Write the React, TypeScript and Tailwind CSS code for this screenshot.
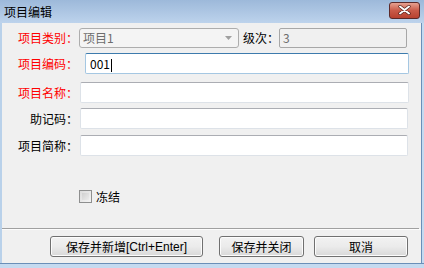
import React from "react";

const font = { fontFamily: '"Noto Sans CJK SC", "Liberation Sans", sans-serif' };

function Label({ text, red, w = "w-[77px]", pr = "pr-[1px]" }: { text: string; red?: boolean; w?: string; pr?: string }) {
  return (
    <div className={`${w} ${pr} shrink-0 text-right text-[12px] leading-none ${red ? "text-[#ff0000]" : "text-black"}`}>
      {text}
    </div>
  );
}

function TextBox({ value, focused, className = "" }: { value?: string; focused?: boolean; className?: string }) {
  return (
    <div
      className={`h-[21px] bg-white rounded-[2px] border flex items-center px-[4px] text-[12px] ${
        focused
          ? "border-[#a5c7e2] border-t-[#3d7bad]"
          : "border-[#dde2e8] border-t-[#abadb3]"
      } ${className}`}
    >
      {value && (
        <span className="text-black">
          {value}
          <span className="inline-block w-px h-[13px] bg-black align-middle ml-px" />
        </span>
      )}
    </div>
  );
}

function Button({ children, className = "" }: { children: React.ReactNode; className?: string }) {
  return (
    <div
      className={`h-[21px] rounded-[3px] border border-[#707070] bg-gradient-to-b from-[#f2f2f2] via-[#ebebeb] to-[#d8d8d8] flex items-center justify-center text-[12px] text-black shadow-[inset_0_0_0_1px_#fcfcfc] ${className}`}
    >
      {children}
    </div>
  );
}

export default function App() {
  return (
    <div className="w-[424px] h-[268px] flex flex-col bg-[#b9d1ea] overflow-hidden" style={font}>
      {/* title bar */}
      <div className="h-[23px] shrink-0 flex items-center justify-between bg-gradient-to-b from-[#9db9da] to-[#bdd3ec] pl-[4px] pr-[4px]">
        <span className="text-[12px] text-black leading-none">项目编辑</span>
        <div className="w-[31px] h-[17px] mt-[-3px] rounded-[3px] border border-[#5c2a2a] bg-gradient-to-b from-[#e6a191] via-[#c95a48] to-[#b8412f] flex items-center justify-center">
          <svg width="13" height="10" viewBox="0 0 13 10">
            <path d="M2 1.5 L11 8.5 M11 1.5 L2 8.5" stroke="#4a1a14" strokeWidth="3.2" strokeLinecap="round" />
            <path d="M2 1.5 L11 8.5 M11 1.5 L2 8.5" stroke="#ffffff" strokeWidth="2" strokeLinecap="round" />
          </svg>
        </div>
      </div>

      {/* body */}
      <div className="flex-1 flex mx-0">
        <div className="w-[2px] bg-[#b9d1ea]" />
        <div className="flex-1 flex flex-col bg-[#f0f0f0]">
          {/* row 1 */}
          <div className="flex items-center mt-[5px] h-[20px]">
            <Label text="项目类别：" red />
            <div className="w-[160px] h-[20px] rounded-[3px] border border-[#adadad] bg-[#f4f4f4] flex items-center justify-between pl-[3px] pr-[6px] text-[12px] text-[#6d6d6d]">
              <span>项目1</span>
              <svg width="7" height="4" viewBox="0 0 7 4">
                <path d="M0 0 H7 L3.5 4 Z" fill="#a0a0a0" />
              </svg>
            </div>
            <div className="w-[40px] text-[12px] text-black pl-[4px]">级次：</div>
            <div className="w-[128px] h-[20px] rounded-[2px] border border-[#a7a7a7] bg-[#f0f0f0] flex items-center px-[3px] text-[12px] text-[#6d6d6d]">
              3
            </div>
          </div>

          {/* row 2 */}
          <div className="flex items-center mt-[5px] h-[21px]">
            <Label text="项目编码：" red w="w-[83px]" pr="pr-[7px]" />
            <TextBox value="001" focused className="w-[324px]" />
          </div>

          {/* row 3 */}
          <div className="flex items-center mt-[8px] h-[21px]">
            <Label text="项目名称：" red w="w-[78px]" pr="pr-[2px]" />
            <TextBox className="w-[329px]" />
          </div>

          {/* row 4 */}
          <div className="flex items-center mt-[5px] h-[21px]">
            <Label text="助记码：" w="w-[78px]" pr="pr-[2px]" />
            <TextBox className="w-[328px]" />
          </div>

          {/* row 5 */}
          <div className="flex items-center mt-[6px] h-[21px]">
            <Label text="项目简称：" w="w-[78px]" pr="pr-[2px]" />
            <TextBox className="w-[328px]" />
          </div>

          {/* checkbox */}
          <div className="flex items-center mt-[34px] ml-[77px] h-[13px]">
            <div className="w-[13px] h-[13px] border border-[#8e8f8f] bg-gradient-to-br from-[#dcdcdc] to-[#f4f4f4] p-[2px]">
              <div className="w-full h-full bg-gradient-to-br from-[#d0d0d0] to-[#ececec]" />
            </div>
            <span className="ml-[4px] text-[12px] text-black">冻结</span>
          </div>

          {/* separator */}
          <div className="mt-[25px] h-px bg-[#a0a0a0] mr-[2px]" />
          <div className="h-px bg-[#fcfcfc]" />

          {/* buttons */}
          <div className="flex mt-[6px] ml-[48px]">
            <Button className="w-[153px]">
              保存并新增<span style={{ fontFamily: '"Liberation Sans", sans-serif' }}>[Ctrl+Enter]</span>
            </Button>
            <Button className="w-[85px] ml-[16px]">保存并关闭</Button>
            <Button className="w-[94px] ml-[10px]">取消</Button>
          </div>
        </div>
        <div className="w-px bg-[#6a8fb8]" />
        <div className="w-[2px] bg-[#c5daf0]" />
      </div>
      <div className="h-px bg-[#6a8fb8]" />
      <div className="h-[4px] bg-[#c5daf0]" />
    </div>
  );
}
